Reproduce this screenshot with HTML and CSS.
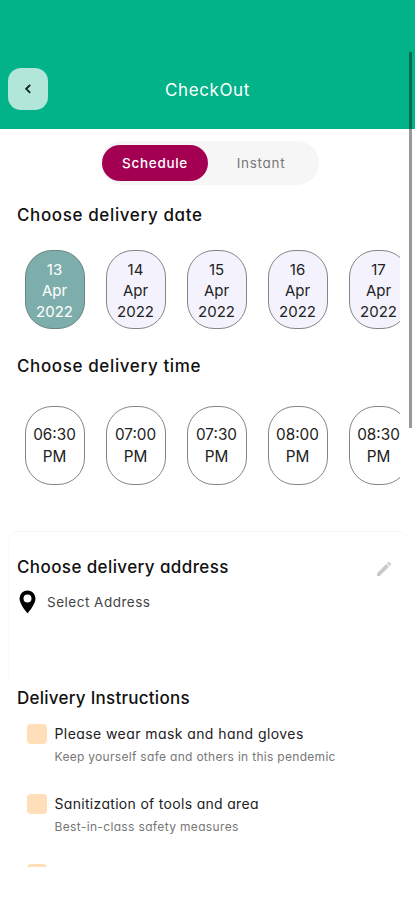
FILE: index.html
```html
<!DOCTYPE html>
<html lang="en">
<head>
<meta charset="utf-8">
<title>CheckOut</title>
<link rel="stylesheet" href="styles.css">
</head>
<body>
<div class="screen">
  <header class="header">
    <button class="back" aria-label="Back"><svg width="8" height="12" viewBox="0 0 8 12"><path d="M6.2 1.8 2.2 5.8 6.2 9.8" fill="none" stroke="#10251f" stroke-width="1.9"/></svg></button>
    <h1 class="title">CheckOut</h1>
  </header>
  <main class="content">
    <div class="toggle">
      <span class="option active">Schedule</span>
      <span class="option">Instant</span>
    </div>
    <section class="dates">
      <h2 class="heading wide">Choose delivery date</h2>
      <div class="row">
        <div class="chip date selected"><span>13</span><span>Apr</span><span>2022</span></div>
        <div class="chip date"><span>14</span><span>Apr</span><span>2022</span></div>
        <div class="chip date"><span>15</span><span>Apr</span><span>2022</span></div>
        <div class="chip date"><span>16</span><span>Apr</span><span>2022</span></div>
        <div class="chip date"><span>17</span><span>Apr</span><span>2022</span></div>
      </div>
    </section>
    <section class="times">
      <h2 class="heading wide">Choose delivery time</h2>
      <div class="row">
        <div class="chip time"><span>06:30</span><span>PM</span></div>
        <div class="chip time"><span>07:00</span><span>PM</span></div>
        <div class="chip time"><span>07:30</span><span>PM</span></div>
        <div class="chip time"><span>08:00</span><span>PM</span></div>
        <div class="chip time"><span>08:30</span><span>PM</span></div>
      </div>
    </section>
    <section class="address">
      <div class="address-head">
        <h2 class="heading address-title">Choose delivery address</h2>
        <svg class="edit" width="16" height="16" viewBox="0 0 16 16" fill="#c9c9c9"><path d="M1 12.3 10.3 3l2.7 2.7L3.7 15H1z"/><path d="m11.1 2.2 1-1q.6-.5 1.2 0l1.5 1.5q.5.6 0 1.2l-1 1z"/></svg>
      </div>
      <div class="place">
        <svg width="17" height="24" viewBox="0 0 17 24"><path fill="#000" fill-rule="evenodd" d="M8.5.5a8 8 0 0 0-8 8c0 6 8 14.8 8 14.8s8-8.800 8-14.800a8 8 0 0 0-8-8zm0 4a4 4 0 1 1 0 8 4 4 0 0 1 0-8z"/></svg>
        <span class="place-text">Select Address</span>
      </div>
    </section>
    <section class="instructions">
      <h2 class="heading instructions-title">Delivery Instructions</h2>
      <div class="item"><i class="box"></i><div><p class="name n1">Please wear mask and hand gloves</p><p class="note k1">Keep yourself safe and others in this pendemic</p></div></div>
      <div class="item"><i class="box"></i><div><p class="name n2">Sanitization of tools and area</p><p class="note k2">Best-in-class safety measures</p></div></div>
      <div class="item"><i class="box"></i></div>
    </section>
  </main>
  <div class="scrollbar"></div>
</div>
</body>
</html>
```
FILE: styles.css
```css
* { box-sizing: border-box; margin: 0; padding: 0; }
body { width: 415px; height: 900px; overflow: hidden; background: #fff; color: #111; font-family: Inter, "Open Sans", sans-serif; font-feature-settings: "cv11"; white-space: nowrap; }
.screen { position: relative; height: 900px; }
.header { display: grid; grid-template-columns: 40px 1fr 40px; align-items: center; height: 129px; padding: 49px 8px 0; background: #02b288; }
.back { display: flex; align-items: center; justify-content: center; width: 40px; height: 42px; border: 0; border-radius: 13px; background: #b2e6d9; }
.title { padding-top: 2px; text-align: center; font-size: 17px; font-weight: 400; color: #fff; letter-spacing: .6px; }
.content { height: 738px; overflow: hidden; padding-top: 12px; }
.toggle { display: flex; align-items: center; width: 219px; height: 44px; margin-left: 100px; padding: 0 2px; border-radius: 22px; background: #f6f6f6; }
.option { width: 106px; height: 36px; line-height: 36px; text-align: center; border-radius: 18px; font-size: 13.5px; color: #777; letter-spacing: .7px; }
.option.active { background: #a30052; color: #fff; font-weight: 500; }
.heading { font-size: 17px; line-height: 24px; font-weight: 500; letter-spacing: .4px; color: #111; }
.wide { letter-spacing: .62px; }
.dates { padding: 18px 15px 0 17px; }
.row { display: flex; gap: 21px; overflow: hidden; padding-left: 7.500px; }
.dates .row { margin-top: 23px; }
.chip { flex: none; display: flex; flex-direction: column; align-items: center; justify-content: center; width: 60px; height: 79px; border: 1px solid #858585; border-radius: 27px; font-size: 15px; line-height: 21px; color: #222; }
.date { background: #f4f3fd; padding-top: 1px; }
.selected { background: #7eaeac; color: #fff; border-color: #6d8582; }
.times { padding: 25px 15px 0 17px; }
.times .row { margin-top: 28px; }
.time { line-height: 22px; font-size: 15.3px; }
.address { height: 149px; margin: 46px 5px 0 8px; padding: 23px 8px 0; border-top: 1px solid #f4f4f4; border-left: 1px solid #fafafa; border-radius: 12px 12px 0 0; }
.address-head { display: flex; justify-content: space-between; align-items: center; padding-right: 10px; }
.edit { position: relative; top: 2px; }
.place { display: flex; align-items: center; gap: 11px; margin-top: 11px; padding-left: 2px; }
.place-text { font-size: 13.5px; color: #444; letter-spacing: .5px; }
.instructions { padding: 6px 17px 0; }
.item { display: flex; gap: 7.500px; height: 70px; padding-left: 10px; }
.instructions-title { margin-bottom: 14px; letter-spacing: .25px; }
.box { width: 20px; height: 20px; border-radius: 4px; background: #ffdfb9; }
.name { font-size: 14px; line-height: 20px; color: #222; }
.n1 { letter-spacing: .42px; }
.n2 { letter-spacing: .31px; }
.note { font-size: 12px; line-height: 16px; margin-top: 5px; color: #777; }
.k1 { letter-spacing: .3px; }
.k2 { letter-spacing: .35px; }
.scrollbar { position: absolute; left: 409px; top: 52px; width: 3px; height: 376px; background: rgba(0,0,0,.4); }
```
